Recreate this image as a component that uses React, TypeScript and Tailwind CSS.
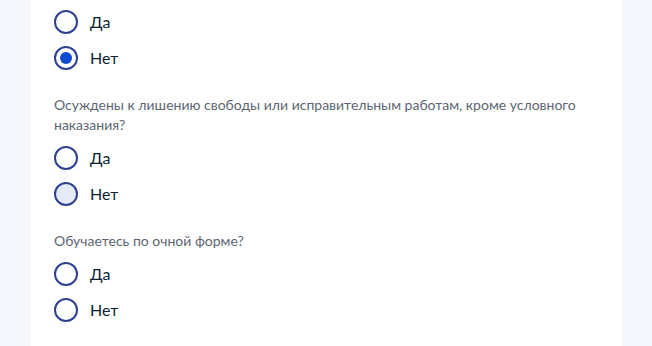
import { useState } from 'react'

type Q = { id: string; title?: string; value: string; hover?: string }

function Radio({ checked, hover, label, onClick }: { checked: boolean; hover?: boolean; label: string; onClick: () => void }) {
  return (
    <button onClick={onClick} className="flex items-center h-6 gap-3 text-left cursor-pointer">
      <span
        className={`w-6 h-6 rounded-full border-2 border-[#2c418f] flex items-center justify-center shrink-0 ${hover ? 'bg-[#e4eaf6]' : 'bg-white'}`}
      >
        {checked && <span className="w-3 h-3 rounded-full bg-[#0d4cd3]" />}
      </span>
      <span className="text-[16px] leading-6 text-[#0b1f33]">{label}</span>
    </button>
  )
}

export default function App() {
  const [answers, setAnswers] = useState<Q[]>([
    { id: 'q1', value: 'no' },
    { id: 'q2', title: 'Осуждены к лишению свободы или исправительным работам, кроме условного наказания?', value: '', hover: 'no' },
    { id: 'q3', title: 'Обучаетесь по очной форме?', value: '' },
  ])

  const pick = (id: string, value: string) =>
    setAnswers(a => a.map(q => (q.id === id ? { ...q, value } : q)))

  return (
    <div className="min-h-[346px] bg-[#f5f7fc] pl-[31px] pr-[30px] font-['Lato','Noto_Sans',sans-serif]">
      <div className="bg-white min-h-[346px] pl-[23px] pr-6 pt-[10px] flex flex-col">
        {answers.map((q, i) => (
          <div key={q.id} className={`flex flex-col ${i > 0 ? 'mt-[25px]' : ''}`}>
            {q.title && (
              <p className="text-[14px] leading-5 text-[#5b6672] mb-[11px]">{q.title}</p>
            )}
            <div className="flex flex-col gap-3">
              <Radio checked={q.value === 'yes'} label="Да" onClick={() => pick(q.id, 'yes')} />
              <Radio checked={q.value === 'no'} hover={q.hover === 'no'} label="Нет" onClick={() => pick(q.id, 'no')} />
            </div>
          </div>
        ))}
      </div>
    </div>
  )
}
